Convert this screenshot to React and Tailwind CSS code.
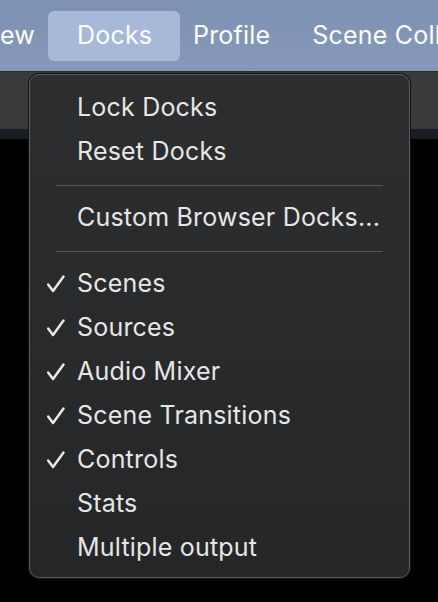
import React from "react";

function Check() {
  return (
    <svg width="20" height="19" viewBox="0 0 20 19" className="absolute left-[-31px] top-1/2 -translate-y-1/2">
      <path d="M2.2 10 L7 16.5 L17.5 2" fill="none" stroke="#e8e8e8" strokeWidth="2.5" strokeLinecap="round" strokeLinejoin="round" />
    </svg>
  );
}

function Item({ label, checked }) {
  return (
    <div className="h-[44px] flex items-center pl-[47px]">
      <span className="relative text-[#e6e6e6] whitespace-nowrap">
        {checked && <Check />}
        {label}
      </span>
    </div>
  );
}

function Sep() {
  return (
    <div className="h-[22px] flex items-center px-[26px]">
      <div className="h-px w-full bg-[#555659]" />
    </div>
  );
}

export default function App() {
  return (
    <div
      className="relative w-[438px] h-[602px] overflow-hidden bg-black"
      style={{ fontFamily: "Inter, 'Noto Sans', sans-serif" }}
    >
      <div className="h-[72px] bg-gradient-to-b from-[#7d91b3] to-[#8699ba] flex items-center text-white text-[25px] tracking-[0.2px] border-b border-[#2a2b2c] whitespace-nowrap">
        <span className="w-[48px] shrink-0 flex justify-end pr-[13px]">View</span>
        <span className="h-[50px] w-[132px] shrink-0 rounded-[6px] bg-[#a7b8d9] flex items-center pl-[29px]">Docks</span>
        <span className="ml-[13px] shrink-0">Profile</span>
        <span className="ml-[42px] shrink-0">Scene Collection</span>
      </div>
      <div className="h-[57px] bg-[#393b3b]" />
      <div className="h-[10px] bg-[#1b1d26]" />
      <div className="h-full bg-black" />

      <div className="absolute left-[29px] top-[74px] w-[381px] h-[504px] rounded-[10px] border border-[#5c5d5f] bg-gradient-to-b from-[#2d2e2f] to-[#252628] pt-[11px] text-[25px] tracking-[0.2px] shadow-[0_0_0_1px_#111]">
        <Item label="Lock Docks" />
        <Item label="Reset Docks" />
        <Sep />
        <Item label="Custom Browser Docks..." />
        <Sep />
        <Item label="Scenes" checked />
        <Item label="Sources" checked />
        <Item label="Audio Mixer" checked />
        <Item label="Scene Transitions" checked />
        <Item label="Controls" checked />
        <Item label="Stats" />
        <Item label="Multiple output" />
      </div>
    </div>
  );
}
